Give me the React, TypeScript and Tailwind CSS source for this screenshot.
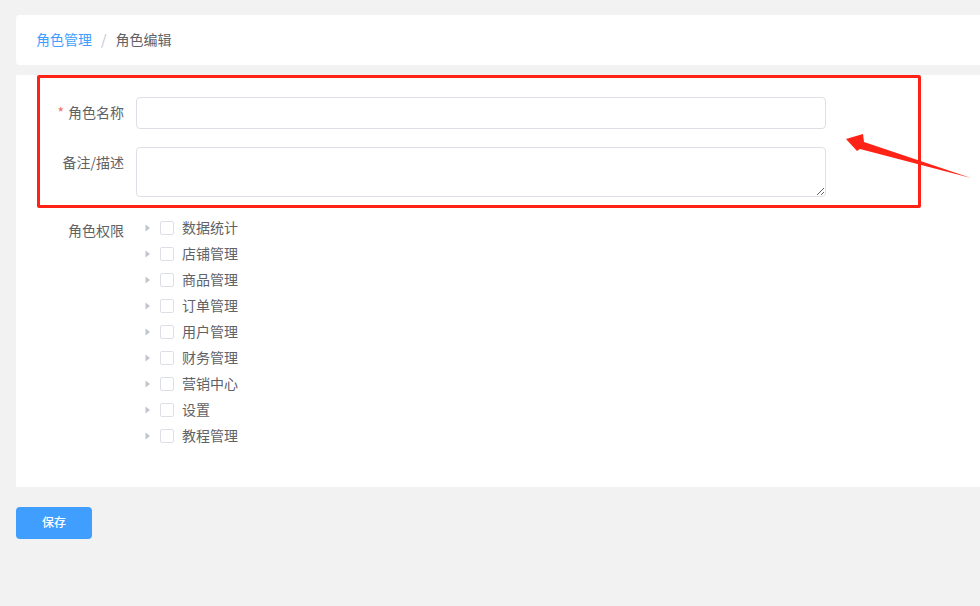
import React from 'react';

const permissions = ['数据统计', '店铺管理', '商品管理', '订单管理', '用户管理', '财务管理', '营销中心', '设置', '教程管理'];

const font = { fontFamily: '"Noto Sans CJK SC", "Noto Sans", sans-serif' };

const TreeNode: React.FC<{ label: string }> = ({ label }) => (
  <div className="flex h-[26px] items-center">
    <span className="flex h-[24px] w-[24px] items-center justify-center">
      <svg width="12" height="12" viewBox="0 0 12 12">
        <polygon points="3.5,2.5 8,6 3.5,9.5" fill="#c0c4cc" />
      </svg>
    </span>
    <span className="mr-2 h-[14px] w-[14px] rounded-[2px] border border-[#dcdfe6] bg-white" />
    <span className="mb-[2px] text-sm text-[#606266]">{label}</span>
  </div>
);

export default function App() {
  return (
    <div className="relative min-h-screen overflow-hidden bg-[#f2f2f2] pl-4 pt-[15px]" style={font}>
      {/* breadcrumb */}
      <div className="flex h-[50px] items-center rounded-l-[4px] bg-white pb-[2px] pl-5 text-sm">
        <span className="text-[#409eff]">角色管理</span>
        <span className="mx-[9px] text-[#c0c4cc]">/</span>
        <span className="text-[#606266]">角色编辑</span>
      </div>

      {/* form card */}
      <div className="relative mt-[10px] bg-white pb-[20px] pt-[22px]">
        <div className="mb-[18px] flex">
          <label className="w-[120px] pr-3 text-right text-sm leading-[30px] text-[#606266]">
            <span className="mr-1 text-[#f56c6c]">*</span>角色名称
          </label>
          <input className="h-[32px] w-[690px] rounded-[4px] border border-[#dcdfe6] px-[15px] text-sm outline-none" />
        </div>
        <div className="mb-[18px] flex">
          <label className="w-[120px] pr-3 text-right text-sm leading-[30px] text-[#606266]">备注/描述</label>
          <textarea className="h-[50px] w-[690px] rounded-[4px] border border-[#dcdfe6] px-[15px] py-[5px] text-sm outline-none" />
        </div>
        <div className="mb-[18px] flex">
          <label className="w-[120px] pr-3 text-right text-sm leading-[30px] text-[#606266]">角色权限</label>
          <div className="flex flex-col">
            {permissions.map((p) => (
              <TreeNode key={p} label={p} />
            ))}
          </div>
        </div>

        {/* annotation box */}
        <div className="pointer-events-none absolute left-[21px] top-0 h-[133px] w-[884px] rounded-[2px] border-[3px] border-[#ff2216]" />
      </div>

      <button className="mt-[20px] h-[32px] w-[76px] rounded-[4px] bg-[#409eff] pb-[2px] text-xs font-medium text-white">保存</button>

      {/* annotation arrow */}
      <svg className="pointer-events-none absolute left-0 top-0" width="980" height="606" viewBox="0 0 980 606">
        <polygon points="846,139 863,134 864,142 971,178 860,149 857,151" fill="#ff2216" />
      </svg>
    </div>
  );
}
